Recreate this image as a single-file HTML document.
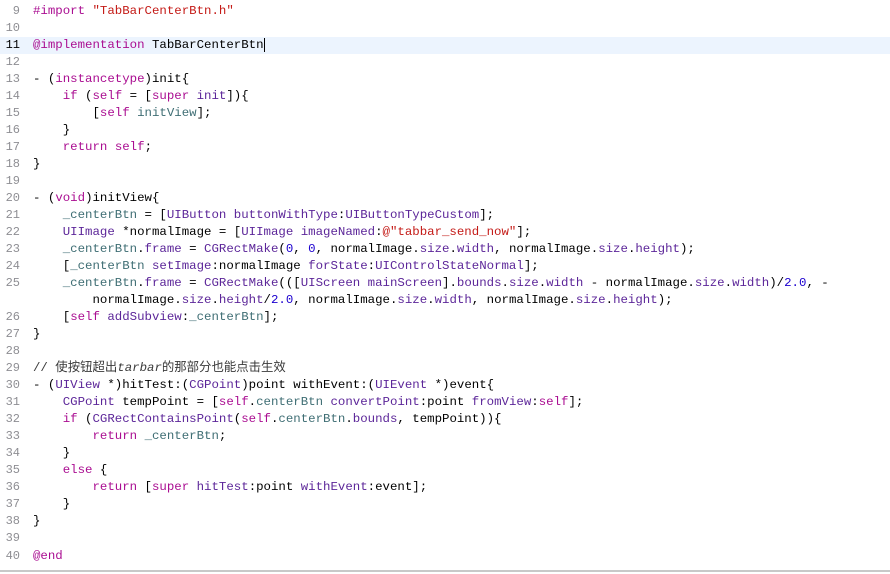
<!DOCTYPE html>
<html><head><meta charset="utf-8"><style>
html,body{margin:0;padding:0;background:#fff;width:890px;height:574px;overflow:hidden}
.w{position:absolute;top:3px;left:0;width:890px;font-family:"Liberation Mono","Noto Sans CJK SC",monospace;font-size:12.4px;color:#000}
.l{height:17.03px;line-height:17.03px;white-space:pre;position:relative}
.n{display:inline-block;width:20px;text-align:right;color:#8e8e93;margin-right:13px;font-size:12px}
.hl{background:#ecf4fe}
.k{color:#aa0d91}.c{color:#5c2699}.p{color:#3f6e74}.s{color:#c41a16}.nu{color:#1c00cf}.cm{color:#3a3a3a}
.cur{border-right:1px solid #000}
.bot{position:absolute;left:0;top:570px;width:890px;height:2px;background:#c8c8c8}
i{font-style:italic}
</style></head><body><div class="w">
<div class="l"><span class="n">9</span><span class="k">#import</span> <span class="s">"TabBarCenterBtn.h"</span></div>
<div class="l"><span class="n">10</span></div>
<div class="l hl"><span class="n" style="color:#000">11</span><span class="k">@implementation</span> <span class="cur">TabBarCenterBtn</span></div>
<div class="l"><span class="n">12</span></div>
<div class="l"><span class="n">13</span>- (<span class="k">instancetype</span>)init{</div>
<div class="l"><span class="n">14</span>    <span class="k">if</span> (<span class="k">self</span> = [<span class="k">super</span> <span class="c">init</span>]){</div>
<div class="l"><span class="n">15</span>        [<span class="k">self</span> <span class="p">initView</span>];</div>
<div class="l"><span class="n">16</span>    }</div>
<div class="l"><span class="n">17</span>    <span class="k">return</span> <span class="k">self</span>;</div>
<div class="l"><span class="n">18</span>}</div>
<div class="l"><span class="n">19</span></div>
<div class="l"><span class="n">20</span>- (<span class="k">void</span>)initView{</div>
<div class="l"><span class="n">21</span>    <span class="p">_centerBtn</span> = [<span class="c">UIButton</span> <span class="c">buttonWithType</span>:<span class="c">UIButtonTypeCustom</span>];</div>
<div class="l"><span class="n">22</span>    <span class="c">UIImage</span> *normalImage = [<span class="c">UIImage</span> <span class="c">imageNamed</span>:<span class="s">@"tabbar_send_now"</span>];</div>
<div class="l"><span class="n">23</span>    <span class="p">_centerBtn</span>.<span class="c">frame</span> = <span class="c">CGRectMake</span>(<span class="nu">0</span>, <span class="nu">0</span>, normalImage.<span class="c">size</span>.<span class="c">width</span>, normalImage.<span class="c">size</span>.<span class="c">height</span>);</div>
<div class="l"><span class="n">24</span>    [<span class="p">_centerBtn</span> <span class="c">setImage</span>:normalImage <span class="c">forState</span>:<span class="c">UIControlStateNormal</span>];</div>
<div class="l"><span class="n">25</span>    <span class="p">_centerBtn</span>.<span class="c">frame</span> = <span class="c">CGRectMake</span>(([<span class="c">UIScreen</span> <span class="c">mainScreen</span>].<span class="c">bounds</span>.<span class="c">size</span>.<span class="c">width</span> - normalImage.<span class="c">size</span>.<span class="c">width</span>)/<span class="nu">2.0</span>, -</div>
<div class="l"><span class="n"></span>        normalImage.<span class="c">size</span>.<span class="c">height</span>/<span class="nu">2.0</span>, normalImage.<span class="c">size</span>.<span class="c">width</span>, normalImage.<span class="c">size</span>.<span class="c">height</span>);</div>
<div class="l"><span class="n">26</span>    [<span class="k">self</span> <span class="c">addSubview</span>:<span class="p">_centerBtn</span>];</div>
<div class="l"><span class="n">27</span>}</div>
<div class="l"><span class="n">28</span></div>
<div class="l"><span class="n">29</span><span class="cm">// 使按钮超出<i>tarbar</i>的那部分也能点击生效</span></div>
<div class="l"><span class="n">30</span>- (<span class="c">UIView</span> *)hitTest:(<span class="c">CGPoint</span>)point withEvent:(<span class="c">UIEvent</span> *)event{</div>
<div class="l"><span class="n">31</span>    <span class="c">CGPoint</span> tempPoint = [<span class="k">self</span>.<span class="p">centerBtn</span> <span class="c">convertPoint</span>:point <span class="c">fromView</span>:<span class="k">self</span>];</div>
<div class="l"><span class="n">32</span>    <span class="k">if</span> (<span class="c">CGRectContainsPoint</span>(<span class="k">self</span>.<span class="p">centerBtn</span>.<span class="c">bounds</span>, tempPoint)){</div>
<div class="l"><span class="n">33</span>        <span class="k">return</span> <span class="p">_centerBtn</span>;</div>
<div class="l"><span class="n">34</span>    }</div>
<div class="l"><span class="n">35</span>    <span class="k">else</span> {</div>
<div class="l"><span class="n">36</span>        <span class="k">return</span> [<span class="k">super</span> <span class="c">hitTest</span>:point <span class="c">withEvent</span>:event];</div>
<div class="l"><span class="n">37</span>    }</div>
<div class="l"><span class="n">38</span>}</div>
<div class="l"><span class="n">39</span></div>
<div class="l"><span class="n">40</span><span class="k">@end</span></div>
</div><div class="bot"></div></body></html>
